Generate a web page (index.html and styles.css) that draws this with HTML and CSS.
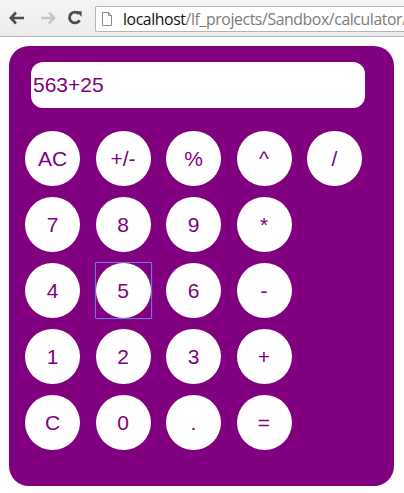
FILE: index.html
```html
<!DOCTYPE html>
<html>
<head>
<meta charset="utf-8">
<link rel="stylesheet" href="styles.css">
</head>
<body>
<div class="toolbar">
  <div class="navs">
    <svg class="nav back" width="16" height="14" viewBox="0 0 16 14"><path d="M7 1.5 L1.8 7 L7 12.5 M2 7 H15" fill="none" stroke="#4d4d4d" stroke-width="2.6" stroke-linejoin="miter"/></svg>
    <svg class="nav fwd" width="16" height="14" viewBox="0 0 16 14"><path d="M9 1.5 L14.2 7 L9 12.5 M14 7 H1" fill="none" stroke="#c4c4c4" stroke-width="2.4"/></svg>
    <svg class="nav reload" width="16" height="16" viewBox="0 0 16 16"><path d="M12.6 10.2 A5.4 5.4 0 1 1 11.8 3.8" fill="none" stroke="#4d4d4d" stroke-width="2.8"/><path d="M9 1.2 L14.6 1.2 L14.6 6.8 Z" fill="#4d4d4d"/></svg>
  </div>
  <div class="omnibox">
    <svg class="page" width="10" height="14" viewBox="0 0 10 14"><path d="M0.5 0.5 H6.5 L9.5 3.5 V13.5 H0.5 Z M6.5 0.5 V3.5 H9.5" fill="#fff" stroke="#8a8a8a" stroke-width="1"/></svg>
    <span class="host">localhost</span><span class="path">/lf_projects/Sandbox/calculator/</span>
  </div>
</div>
<div class="calc">
  <div class="display">563+25</div>
  <div class="keys">
    <button class="key">AC</button>
    <button class="key">+/-</button>
    <button class="key">%</button>
    <button class="key">^</button>
    <button class="key">/</button>
    <button class="key">7</button>
    <button class="key">8</button>
    <button class="key">9</button>
    <button class="key">*</button>
    <span></span>
    <button class="key">4</button>
    <button class="key focused">5</button>
    <button class="key">6</button>
    <button class="key">-</button>
    <span></span>
    <button class="key">1</button>
    <button class="key">2</button>
    <button class="key">3</button>
    <button class="key">+</button>
    <span></span>
    <button class="key">C</button>
    <button class="key">0</button>
    <button class="key">.</button>
    <button class="key">=</button>
  </div>
</div>
</body>
</html>
```
FILE: styles.css
```css
html, body {
  margin: 0;
  padding: 0;
  background: #fff;
  overflow: hidden;
}
.toolbar {
  height: 36px;
  border-bottom: 1px solid #b9b9b9;
  background: linear-gradient(#f4f4f4, #ececec);
  display: flex;
  align-items: center;
  overflow: hidden;
  white-space: nowrap;
}
.navs {
  display: flex;
  align-items: center;
  width: 95px;
  flex: none;
}
.nav { display: block; flex: none; }
.back { margin-left: 9px; }
.fwd { margin-left: 15px; }
.reload { margin-left: 11px; }
.omnibox {
  flex: none;
  height: 24px;
  margin-top: 2px;
  border: 1px solid #b5b5b5;
  border-right: none;
  border-radius: 2px 0 0 2px;
  background: #fff;
  display: flex;
  align-items: center;
  padding-left: 6px;
  width: 320px;
  font-family: "Open Sans", "DejaVu Sans", sans-serif;
  font-size: 15.8px;
  letter-spacing: -0.4px;
}
.page { margin-right: 11px; flex: none; }
.host { color: #111; }
.path { color: #7c7c7c; }

.calc {
  margin: 9px 0 0 9px;
  width: 385px;
  height: 440px;
  background: #800080;
  border-radius: 20px;
  padding-top: 16px;
  box-sizing: border-box;
}
.display {
  margin-left: 22px;
  width: 334px;
  height: 46px;
  background: #fff;
  border-radius: 12px;
  box-sizing: border-box;
  padding-left: 2px;
  display: flex;
  align-items: center;
  font-family: "Liberation Sans", Arial, sans-serif;
  font-size: 21px;
  color: #800080;
}
.keys {
  margin: 23px 0 0 16px;
  display: grid;
  grid-template-columns: repeat(5, 55px);
  grid-auto-rows: 55px;
  column-gap: 15.5px;
  row-gap: 11px;
}
.key {
  width: 55px;
  height: 55px;
  border: none;
  border-radius: 50%;
  background: #fff;
  color: #800080;
  font-family: "Liberation Sans", Arial, sans-serif;
  font-size: 21px;
  padding: 0;
  margin: 0;
  display: flex;
  align-items: center;
  justify-content: center;
}
.focused {
  position: relative;
}
.focused::after {
  content: "";
  position: absolute;
  left: -1px;
  top: -1px;
  right: -1px;
  bottom: -1px;
  border: 1px solid #6f74e6;
  box-shadow: 0 0 1px rgba(140, 150, 240, 0.7);
  border-radius: 1px;
}
```
